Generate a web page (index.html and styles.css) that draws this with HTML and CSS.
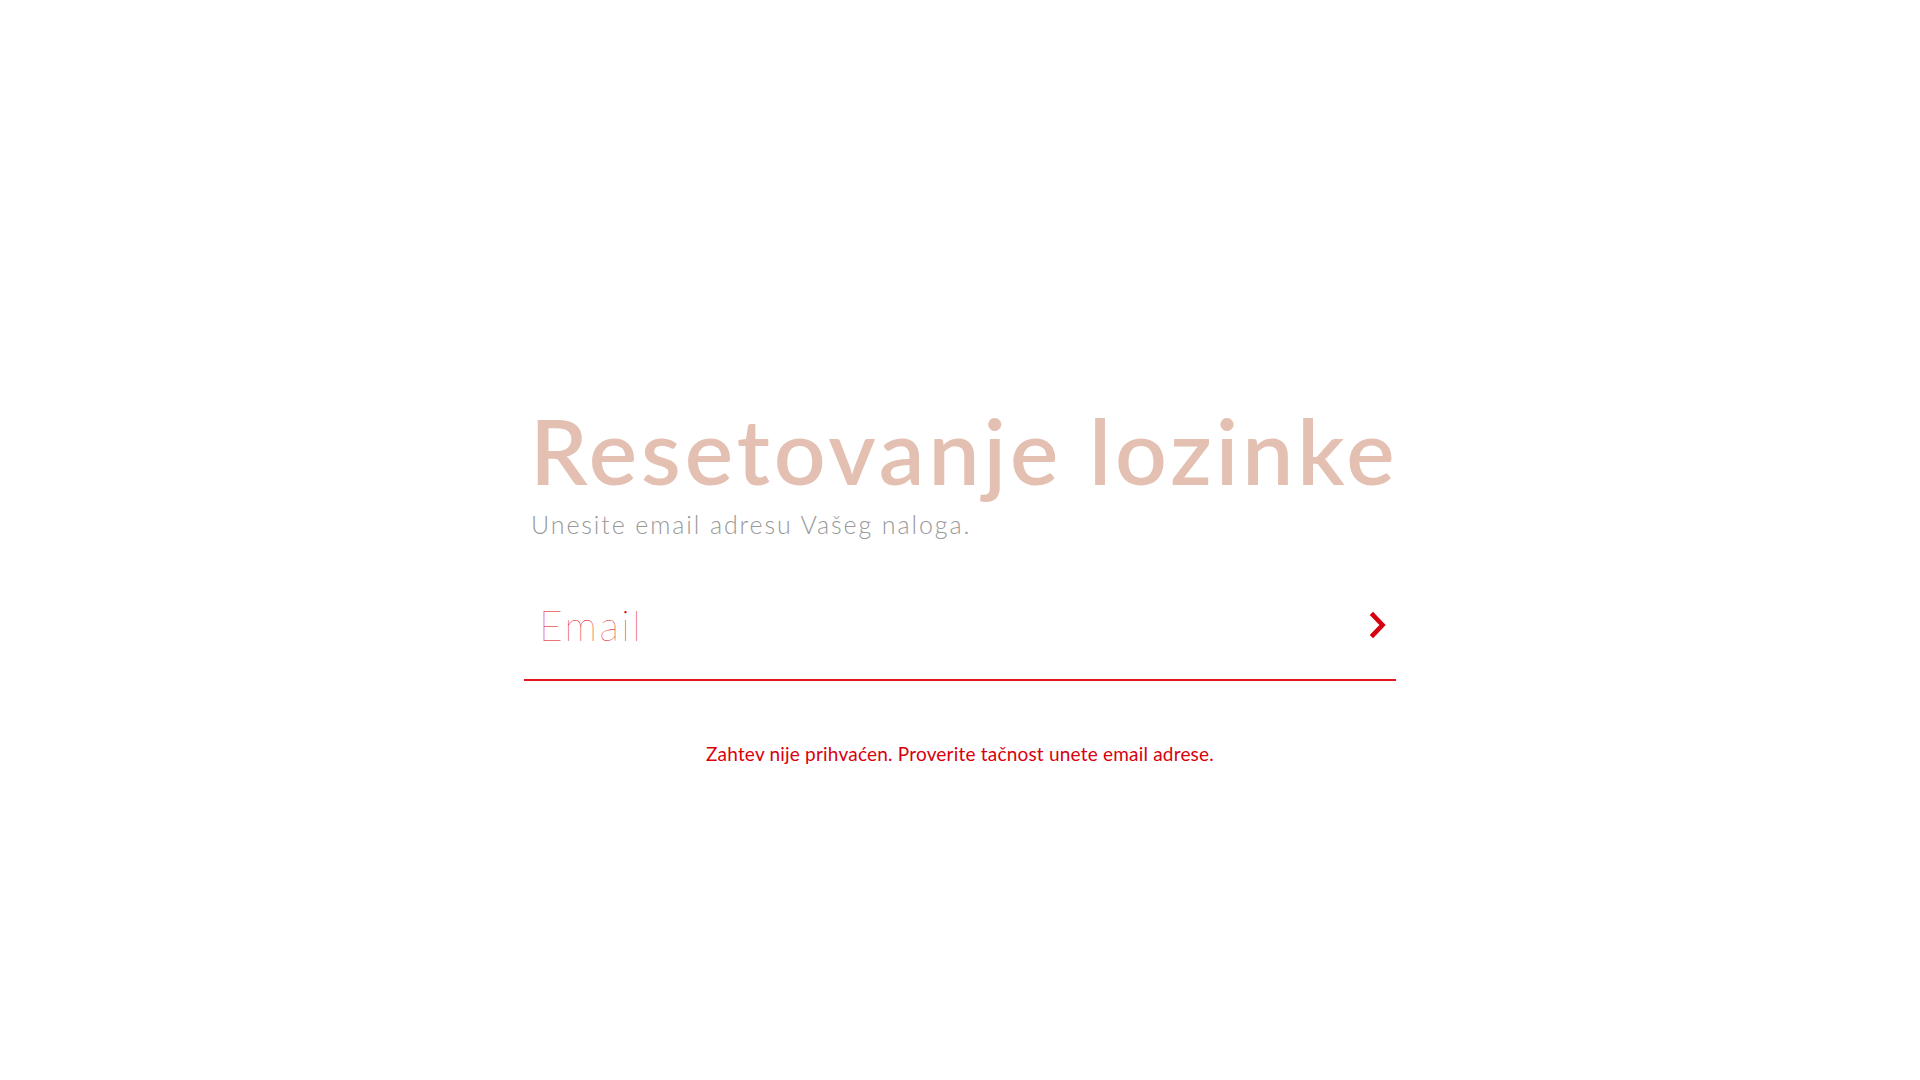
FILE: index.html
```html
<!DOCTYPE html>
<html lang="sr">
<head>
<meta charset="utf-8">
<title>Resetovanje lozinke</title>
<link rel="stylesheet" href="styles.css">
</head>
<body>
<main class="wrap">
  <h1 class="title">Resetovanje lozinke</h1>
  <p class="subtitle">Unesite email adresu Vašeg naloga.</p>
  <form class="field">
    <input class="email" type="email" placeholder="Email">
    <button class="go" type="button" aria-label="Dalje">
      <svg width="20" height="28" viewBox="0 0 20 28"><polyline points="4,4 13.5,14 4,24" fill="none" stroke="#d7000f" stroke-width="4.6" stroke-linecap="square" stroke-linejoin="miter"/></svg>
    </button>
  </form>
  <p class="error">Zahtev nije prihvaćen. Proverite tačnost unete email adrese.</p>
</main>
</body>
</html>
```
FILE: styles.css
```css
html, body {
  margin: 0;
  padding: 0;
  background: #fff;
}
body {
  font-family: "Lato", "Open Sans", "Liberation Sans", sans-serif;
}
.wrap {
  width: 872px;
  margin: 0 auto;
  padding-top: 400px;
  display: flex;
  flex-direction: column;
}
.title {
  margin: 0;
  padding-left: 6px;
  font-size: 91px;
  line-height: 100px;
  font-weight: 600;
  color: #e4c0b3;
  letter-spacing: 4px;
  white-space: nowrap;
}
.subtitle {
  margin: 9px 0 0;
  padding-left: 7px;
  font-size: 25px;
  line-height: 30px;
  font-weight: 300;
  color: #999999;
  letter-spacing: 1.9px;
}
.field {
  margin-top: 32px;
  display: flex;
  align-items: center;
  border-bottom: 2px solid #e3151d;
  height: 108px;
}
.email {
  flex: 1;
  border: 0;
  outline: 0;
  background: transparent;
  padding: 0 0 0 15px;
  font-family: inherit;
  font-size: 41px;
  font-weight: 200;
  letter-spacing: 2.5px;
  color: #dd0000;
  height: 60px;
}
.email::placeholder {
  color: #dd0000;
  opacity: 1;
}
.go {
  border: 0;
  background: transparent;
  padding: 0;
  margin-right: 7px;
  width: 20px;
  height: 28px;
  display: flex;
  cursor: pointer;
}
.error {
  margin: 61px 0 0;
  text-align: center;
  font-size: 19px;
  line-height: 24px;
  font-weight: 400;
  letter-spacing: 0.2px;
  color: #d9000d;
}
```
